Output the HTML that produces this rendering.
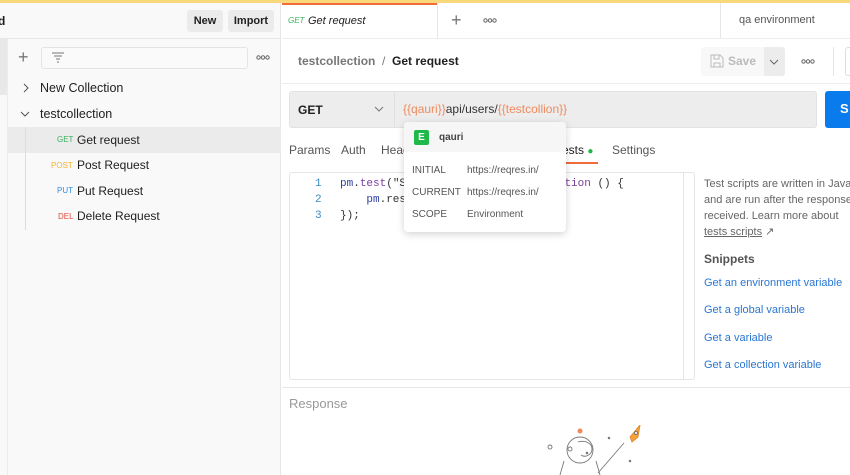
<!DOCTYPE html>
<html><head><meta charset="utf-8"><style>
*{box-sizing:border-box;margin:0;padding:0}
body{width:850px;height:475px;overflow:hidden;background:#fff;font-family:"Liberation Sans",sans-serif;font-size:12px;color:#212121;position:relative}
.a{position:absolute;white-space:nowrap}
.mono{font-family:"Liberation Mono",monospace}
</style></head><body>
<div class="a" style="left:0;top:0;width:850px;height:3px;background:#f8d87a"></div>
<!-- sidebar -->
<div class="a" style="left:0;top:3px;width:281px;height:472px;background:#f9f9f9;border-right:1px solid #e6e6e6"></div>
<div class="a" style="left:0;top:38px;width:281px;height:1px;background:#e6e6e6"></div>
<div class="a" style="left:0;top:39px;width:7px;height:56px;background:#e8e8e8"></div>
<div class="a" style="left:7px;top:39px;width:1px;height:436px;background:#ececec"></div>
<div class="a" style="left:-2px;top:14px;font-weight:bold;font-size:12px">d</div>
<div class="a" style="left:187px;top:10px;width:36px;height:22px;background:#ebebeb;border-radius:3px;font-weight:bold;font-size:11px;text-align:center;line-height:22px">New</div>
<div class="a" style="left:228px;top:10px;width:46px;height:22px;background:#ebebeb;border-radius:3px;font-weight:bold;font-size:11px;text-align:center;line-height:22px">Import</div>
<div class="a" style="left:18px;top:47px;font-size:18px;color:#777;line-height:20px">+</div>
<div class="a" style="left:41px;top:47px;width:207px;height:22px;border:1px solid #e4e4e4;border-radius:3px;background:#fafafa"></div>
<svg class="a" style="left:51px;top:51px" width="14" height="12"><path d="M1 2h12M3 5h8M5 8h4M6 11h2" stroke="#777" stroke-width="1"/></svg>
<svg class="a" style="left:256px;top:55px" width="14" height="5"><g fill="none" stroke="#666"><circle cx="2.5" cy="2.5" r="1.7"/><circle cx="7" cy="2.5" r="1.7"/><circle cx="11.5" cy="2.5" r="1.7"/></g></svg>
<svg class="a" style="left:22px;top:83px" width="8" height="10"><path d="M2 1l4 4-4 4" stroke="#555" fill="none"/></svg>
<div class="a" style="left:40px;top:81px;font-size:12.5px">New Collection</div>
<svg class="a" style="left:20px;top:110px" width="10" height="8"><path d="M1 2l4 4 4-4" stroke="#555" fill="none"/></svg>
<div class="a" style="left:40px;top:107px;font-size:12.5px">testcollection</div>
<div class="a" style="left:8px;top:127px;width:273px;height:26px;background:#ebebeb"></div>
<div class="a" style="left:25px;top:127px;width:1px;height:103px;background:#ddd"></div>
<div class="a" style="left:57px;top:135px;font-size:8px;color:#3bb15c">GET</div>
<div class="a" style="left:77px;top:133px;font-size:12px">Get request</div>
<div class="a" style="left:51px;top:161px;font-size:8px;color:#f5b335">POST</div>
<div class="a" style="left:77px;top:158px;font-size:12px">Post Request</div>
<div class="a" style="left:57px;top:186px;font-size:8px;color:#2f8ee5">PUT</div>
<div class="a" style="left:77px;top:184px;font-size:12px">Put Request</div>
<div class="a" style="left:58px;top:212px;font-size:8px;color:#e0483d">DEL</div>
<div class="a" style="left:77px;top:209px;font-size:12px">Delete Request</div>
<!-- tabs -->
<div class="a" style="left:282px;top:38px;width:568px;height:1px;background:#ececec"></div>
<div class="a" style="left:282px;top:3px;width:155px;height:2px;background:#f26b3a"></div>
<div class="a" style="left:437px;top:3px;width:1px;height:36px;background:#e6e6e6"></div>
<div class="a" style="left:288px;top:16px;font-size:8px;color:#3bb15c;font-style:italic">GET</div>
<div class="a" style="left:308px;top:15px;font-size:11px;font-style:italic">Get request</div>
<div class="a" style="left:451px;top:10px;font-size:18px;color:#777">+</div>
<svg class="a" style="left:483px;top:18px" width="14" height="5"><g fill="none" stroke="#666"><circle cx="2.5" cy="2.5" r="1.7"/><circle cx="7" cy="2.5" r="1.7"/><circle cx="11.5" cy="2.5" r="1.7"/></g></svg>
<div class="a" style="left:720px;top:3px;width:1px;height:35px;background:#e6e6e6"></div>
<div class="a" style="left:739px;top:14px;font-size:11px;color:#555">qa environment</div>
<!-- breadcrumb -->
<div class="a" style="left:298px;top:54px;font-size:12px;color:#777;font-weight:bold">testcollection <span style="font-weight:normal">&nbsp;/&nbsp;</span> <span style="color:#212121">Get request</span></div>
<div class="a" style="left:701px;top:47px;width:64px;height:29px;background:#f8f8f8;border-radius:3px"></div>
<svg class="a" style="left:710px;top:54px" width="14" height="14"><path d="M1 1h9l3 3v9H1z M4 1v4h5V1 M4 13V9h6v4" stroke="#bbb" fill="none"/></svg>
<div class="a" style="left:728px;top:54px;font-size:12px;color:#bbb;font-weight:bold">Save</div>
<div class="a" style="left:764px;top:47px;width:21px;height:29px;background:#ececec;border-radius:0 3px 3px 0"></div>
<svg class="a" style="left:768px;top:58px" width="12" height="8"><path d="M2 2l4 4 4-4" stroke="#666" fill="none"/></svg>
<svg class="a" style="left:801px;top:59px" width="14" height="5"><g fill="none" stroke="#666"><circle cx="2.5" cy="2.5" r="1.7"/><circle cx="7" cy="2.5" r="1.7"/><circle cx="11.5" cy="2.5" r="1.7"/></g></svg>
<div class="a" style="left:833px;top:47px;width:1px;height:29px;background:#e6e6e6"></div>
<div class="a" style="left:845px;top:47px;width:10px;height:29px;border:1px solid #ddd;border-radius:3px"></div>
<div class="a" style="left:282px;top:83px;width:568px;height:1px;background:#ececec"></div>
<!-- url -->
<div class="a" style="left:289px;top:91px;width:528px;height:37px;background:#ededed;border:1px solid #e2e2e2;border-radius:3px"></div>
<div class="a" style="left:394px;top:91px;width:1px;height:37px;background:#e0e0e0"></div>
<div class="a" style="left:298px;top:103px;font-size:12px;font-weight:bold">GET</div>
<svg class="a" style="left:373px;top:105px" width="12" height="8"><path d="M2 2l4 4 4-4" stroke="#777" fill="none"/></svg>
<div class="a" style="left:403px;top:102px;font-size:12px;color:#333"><span style="color:#f08a5d">{{qauri}}</span>api/users/<span style="color:#f08a5d">{{testcollion}}</span></div>
<div class="a" style="left:825px;top:91px;width:40px;height:37px;background:#097bed;border-radius:3px;color:#fff;font-weight:bold;font-size:13px;padding:10px 0 0 15px">S</div>
<!-- req tabs -->
<div class="a" style="left:289px;top:143px;font-size:12px;color:#555">Params</div>
<div class="a" style="left:341px;top:143px;font-size:12px;color:#555">Auth</div>
<div class="a" style="left:381px;top:143px;font-size:12px;color:#555">Headers</div>
<div class="a" style="left:556px;top:143px;font-size:12px;color:#212121">Tests <span style="color:#1fb94a;font-size:10px">●</span></div>
<div class="a" style="left:556px;top:162px;width:42px;height:2px;background:#f26b3a"></div>
<div class="a" style="left:612px;top:143px;font-size:12px;color:#555">Settings</div>
<!-- editor -->
<div class="a" style="left:289px;top:172px;width:406px;height:208px;border:1px solid #e6e6e6;border-radius:3px"></div>
<div class="a" style="left:683px;top:172px;width:1px;height:208px;background:#e6e6e6"></div>
<div class="a mono" style="left:315px;top:176px;font-size:11px;line-height:16px;color:#3b8bc4;text-align:right">1<br>2<br>3</div>
<div class="a mono" style="left:340px;top:176px;font-size:11px;line-height:16px;color:#333"><span style="color:#2c3ea8">pm</span>.<span style="color:#7a3e9d">test</span>("S&nbsp;&nbsp;&nbsp;&nbsp;&nbsp;&nbsp;&nbsp;&nbsp;&nbsp;&nbsp;&nbsp;&nbsp;&nbsp;&nbsp;&nbsp;&nbsp;&nbsp;&nbsp;&nbsp;&nbsp;&nbsp;&nbsp;&nbsp;&nbsp;<span style="color:#7a3e9d">tion</span> () {<br>&nbsp;&nbsp;&nbsp;&nbsp;<span style="color:#2c3ea8">pm</span>.res&nbsp;&nbsp;&nbsp;&nbsp;&nbsp;&nbsp;&nbsp;&nbsp;&nbsp;&nbsp;&nbsp;&nbsp;&nbsp;&nbsp;&nbsp;&nbsp;&nbsp;&nbsp;&nbsp;&nbsp;&nbsp;&nbsp;);<br>});</div>
<!-- side panel -->
<div class="a" style="left:704px;top:176px;font-size:11px;line-height:16px;color:#666">Test scripts are written in JavaScript<br>and are run after the response is<br>received. Learn more about<br><span style="text-decoration:underline">tests scripts</span> ↗</div>
<div class="a" style="left:704px;top:252px;font-size:12px;font-weight:bold;color:#555">Snippets</div>
<div class="a" style="left:704px;top:277px;font-size:11px;color:#2a77d0">Get an environment variable</div>
<div class="a" style="left:704px;top:304px;font-size:11px;color:#2a77d0">Get a global variable</div>
<div class="a" style="left:704px;top:332px;font-size:11px;color:#2a77d0">Get a variable</div>
<div class="a" style="left:704px;top:359px;font-size:11px;color:#2a77d0">Get a collection variable</div>
<!-- response -->
<div class="a" style="left:282px;top:387px;width:568px;height:1px;background:#e6e6e6"></div>
<div class="a" style="left:289px;top:396px;font-size:13px;color:#999">Response</div>
<svg class="a" style="left:540px;top:425px" width="120" height="50" fill="none" stroke="#777" stroke-width="0.9">
<circle cx="40" cy="6" r="2.5" fill="#f08a5d" stroke="none"/>
<circle cx="40" cy="25" r="13"/><path d="M38 17c7-2 14 1 14 7s-7 9-11 6"/>
<circle cx="10" cy="22" r="2"/><circle cx="30" cy="24" r="2"/>
<path d="M24 36l-4 14M56 36l4 14M58 48l26-30"/>
<circle cx="69" cy="13" r="0.8" fill="#777"/><circle cx="47" cy="28" r="0.8" fill="#777"/><circle cx="90" cy="36" r="0.8" fill="#777"/>
<path d="M90 12l10-12 -2 12-6 5z" fill="#f5a03a" stroke="#e08a2a"/><circle cx="96" cy="8" r="1.5" fill="#fff"/>
</svg>
<!-- popup -->
<div class="a" style="left:404px;top:122px;width:162px;height:110px;background:#fff;border-radius:4px;box-shadow:0 2px 8px rgba(0,0,0,.18)"></div>
<div class="a" style="left:404px;top:122px;width:162px;height:30px;background:#f6f6f6;border-radius:4px 4px 0 0"></div>
<div class="a" style="left:414px;top:130px;width:15px;height:15px;background:#1fb94a;border-radius:2px;color:#fff;font-size:10px;font-weight:bold;text-align:center;line-height:15px">E</div>
<div class="a" style="left:439px;top:132px;font-size:10px;font-weight:bold;color:#444">qauri</div>
<div class="a" style="left:412px;top:160px;font-size:10px;color:#555;line-height:22px">INITIAL<br>CURRENT<br>SCOPE</div>
<div class="a" style="left:467px;top:160px;font-size:10px;color:#555;line-height:22px">https://reqres.in/<br>https://reqres.in/<br>Environment</div>
</body></html>
